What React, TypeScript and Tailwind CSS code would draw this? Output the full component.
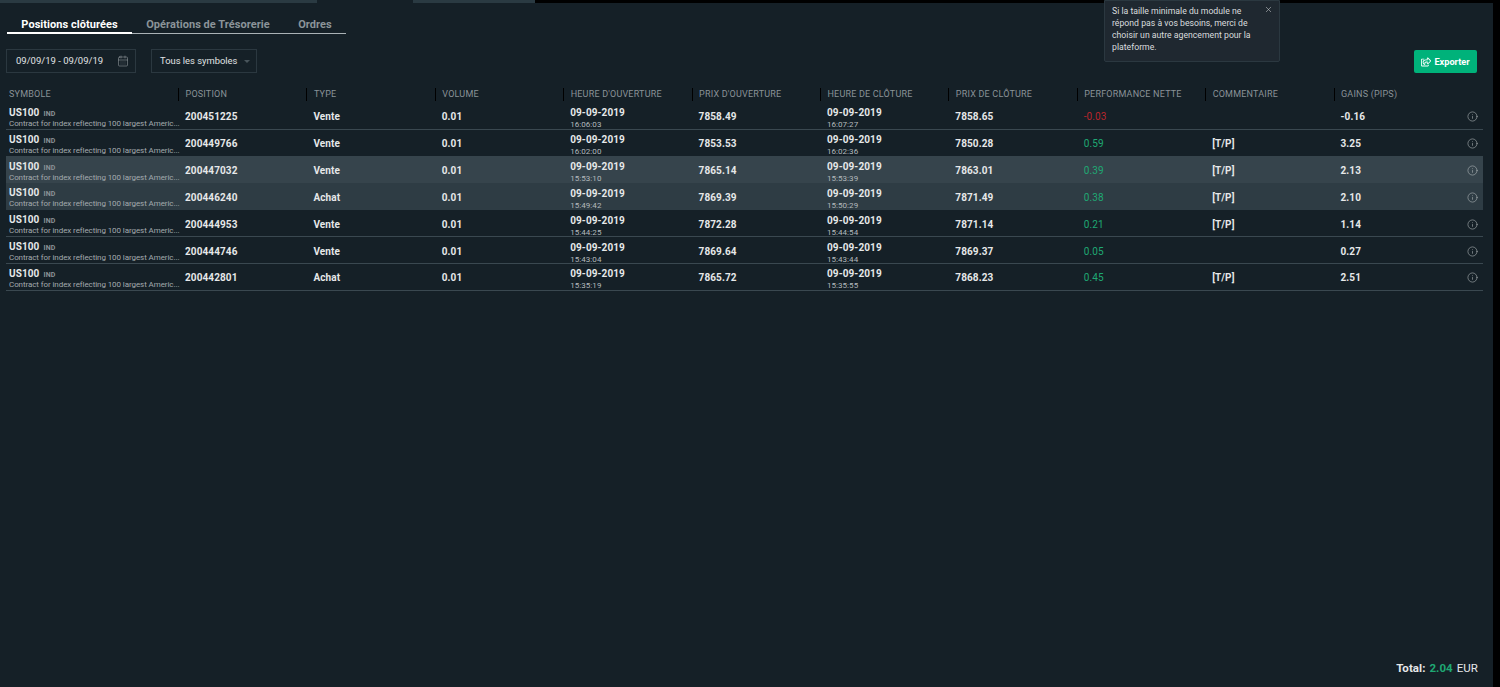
import { CalendarDays, Info, X } from "lucide-react";
import { FaRegShareSquare } from "react-icons/fa";

const line = "border-b border-[#3a4850]";

const rows = [
  { pos: "200451225", type: "Vente", od: "16:06:03", op: "7858.49", ct: "16:07:27", cp: "7858.65", perf: "-0.03", com: "", pips: "-0.16", bg: line },
  { pos: "200449766", type: "Vente", od: "16:02:00", op: "7853.53", ct: "16:02:36", cp: "7850.28", perf: "0.59", com: "[T/P]", pips: "3.25", bg: "border-b border-[#36444c]" },
  { pos: "200447032", type: "Vente", od: "15:53:10", op: "7865.14", ct: "15:53:39", cp: "7863.01", perf: "0.39", com: "[T/P]", pips: "2.13", bg: "bg-[#36444c] border-b border-[#2e3c44]" },
  { pos: "200446240", type: "Achat", od: "15:49:42", op: "7869.39", ct: "15:50:29", cp: "7871.49", perf: "0.38", com: "[T/P]", pips: "2.10", bg: "bg-[#2e3c44] border-b border-[#2e3c44]" },
  { pos: "200444953", type: "Vente", od: "15:44:25", op: "7872.28", ct: "15:44:54", cp: "7871.14", perf: "0.21", com: "[T/P]", pips: "1.14", bg: line },
  { pos: "200444746", type: "Vente", od: "15:43:04", op: "7869.64", ct: "15:43:44", cp: "7869.37", perf: "0.05", com: "", pips: "0.27", bg: line },
  { pos: "200442801", type: "Achat", od: "15:35:19", op: "7865.72", ct: "15:35:55", cp: "7868.23", perf: "0.45", com: "[T/P]", pips: "2.51", bg: line },
];

const headers = [
  "POSITION",
  "TYPE",
  "VOLUME",
  "HEURE D'OUVERTURE",
  "PRIX D'OUVERTURE",
  "HEURE DE CLÔTURE",
  "PRIX DE CLÔTURE",
  "PERFORMANCE NETTE",
  "COMMENTAIRE",
  "GAINS (PIPS)",
];

const cell = "w-[128.4px] shrink-0 pl-[7px] tracking-[0.1px]";
const strong = cell + " text-[10px] font-bold text-[#e6e8e9]";

function DateCell({ time }: { time: string }) {
  return (
    <div className={cell + " pt-[4px]"}>
      <div className="text-[10px] leading-[12px] font-bold text-[#e6e8e9]">09-09-2019</div>
      <div className="text-[8px] leading-[11px] tracking-[0.05px] text-[#b4babd]">{time}</div>
    </div>
  );
}

export default function App() {
  return (
    <div className="w-[1500px] h-[687px] bg-black overflow-hidden relative font-['Roboto',sans-serif]">
      {/* Top strip */}
      <div className="flex h-[3px]">
        <div className="w-[317px] bg-[#2a3a42]"></div>
        <div className="w-[96px] bg-[#152027]"></div>
        <div className="w-[122px] bg-[#2a3a42]"></div>
      </div>

      <div className="w-[1493px] h-[684px] bg-[#152027] flex flex-col">
        {/* Tabs */}
        <div className="flex ml-[7px] mt-[12px] w-[339px] h-[19px] border-b border-[#aab2b6] text-[11px] font-bold tracking-[0.05px]">
          <div className="w-[125px] h-[19px] border-b-2 border-white text-center text-white leading-[20px]">Positions clôturées</div>
          <div className="w-[152px] text-center text-[#8b9499] leading-[20px]">Opérations de Trésorerie</div>
          <div className="w-[62px] text-center text-[#8b9499] leading-[20px]">Ordres</div>
        </div>

        {/* Filters */}
        <div className="flex items-start mt-[15px] pl-[6px] pr-[16px]">
          <div className="flex items-center justify-between w-[130px] h-[24px] border border-[#2b3840] pl-[9px] pr-[6px] text-[9.5px] text-[#e0e3e4]">
            <span>09/09/19 - 09/09/19</span>
            <CalendarDays size={12} strokeWidth={1} className="text-[#a4abaf]" />
          </div>
          <div className="flex items-center w-[106px] h-[24px] ml-[15px] border border-[#2b3840] pl-[8px] text-[9.4px] text-[#e0e3e4]">
            <span>Tous les symboles</span>
            <span className="ml-[7px] w-0 h-0 border-x-[3px] border-x-transparent border-t-[3px] border-t-[#48545b]"></span>
          </div>
          <div className="ml-auto mt-[1px] flex items-center justify-center gap-[3px] w-[63px] h-[23px] rounded-[2px] bg-[#00b27a] text-[9.2px] font-bold text-white">
            <FaRegShareSquare size={10} />
            <span>Exporter</span>
          </div>
        </div>

        {/* Table header */}
        <div className="flex items-center ml-[6px] mt-[14px] h-[15px] text-[9px] tracking-[0.2px] text-[#8a9297]">
          <div className="w-[172px] shrink-0 pl-[3px]">SYMBOLE</div>
          {headers.map((h) => (
            <div key={h} className="w-[128.4px] shrink-0 h-[13px] border-l border-black pl-[6.5px] leading-[13px]">
              {h}
            </div>
          ))}
        </div>

        {/* Rows */}
        <div className="ml-[6px] mt-[1px] w-[1477px]">
          {rows.map((r) => (
            <div key={r.pos} className={"flex items-center h-[26.85px] pt-[2px] " + r.bg}>
              <div className="w-[172px] shrink-0 pl-[3px] pt-[2px]">
                <div className="flex items-baseline gap-[4px] leading-[10px]">
                  <span className="text-[10px] font-bold tracking-[0.1px] text-[#e6e8e9]">US100</span>
                  <span className="text-[7px] font-bold tracking-[0.2px] text-[#8a9297]">IND</span>
                </div>
                <div className="text-[8px] leading-[9px] tracking-[-0.08px] text-[#a3aaae] whitespace-nowrap">
                  Contract for index reflecting 100 largest Americ...
                </div>
              </div>
              <div className={strong}>{r.pos}</div>
              <div className={strong}>{r.type}</div>
              <div className={strong}>0.01</div>
              <DateCell time={r.od} />
              <div className={strong}>{r.op}</div>
              <DateCell time={r.ct} />
              <div className={strong}>{r.cp}</div>
              <div className={cell + " text-[10px] " + (r.perf.startsWith("-") ? "text-[#b8262c]" : "text-[#1fa873]")}>{r.perf}</div>
              <div className={strong}>{r.com}</div>
              <div className={strong}>{r.pips}</div>
              <Info size={11} strokeWidth={1.25} className="ml-[5px] text-[#b4babd]" />
            </div>
          ))}
        </div>

        {/* Total */}
        <div className="mt-auto mb-[12px] pr-[15px] flex justify-end gap-[4px] text-[11.5px] leading-[14px] tracking-[0.05px] text-[#e6e8e9]">
          <span className="font-bold">Total:</span>
          <span className="font-bold text-[#1fa873]">2.04</span>
          <span>EUR</span>
        </div>
      </div>

      {/* Layout hint */}
      <div className="absolute left-[1104px] top-0 w-[176px] h-[62px] bg-[#1f2830] border border-[#2b3840] rounded-b-[2px] pl-[7px] pt-[5px] text-[8.7px] leading-[11.9px] text-[#d9dcde]">
        <p className="w-[145px]">Si la taille minimale du module ne répond pas à vos besoins, merci de choisir un autre agencement pour la plateforme.</p>
        <X size={9} strokeWidth={1.5} className="absolute right-[6px] top-[4px] text-[#c6cacc]" />
      </div>
    </div>
  );
}
